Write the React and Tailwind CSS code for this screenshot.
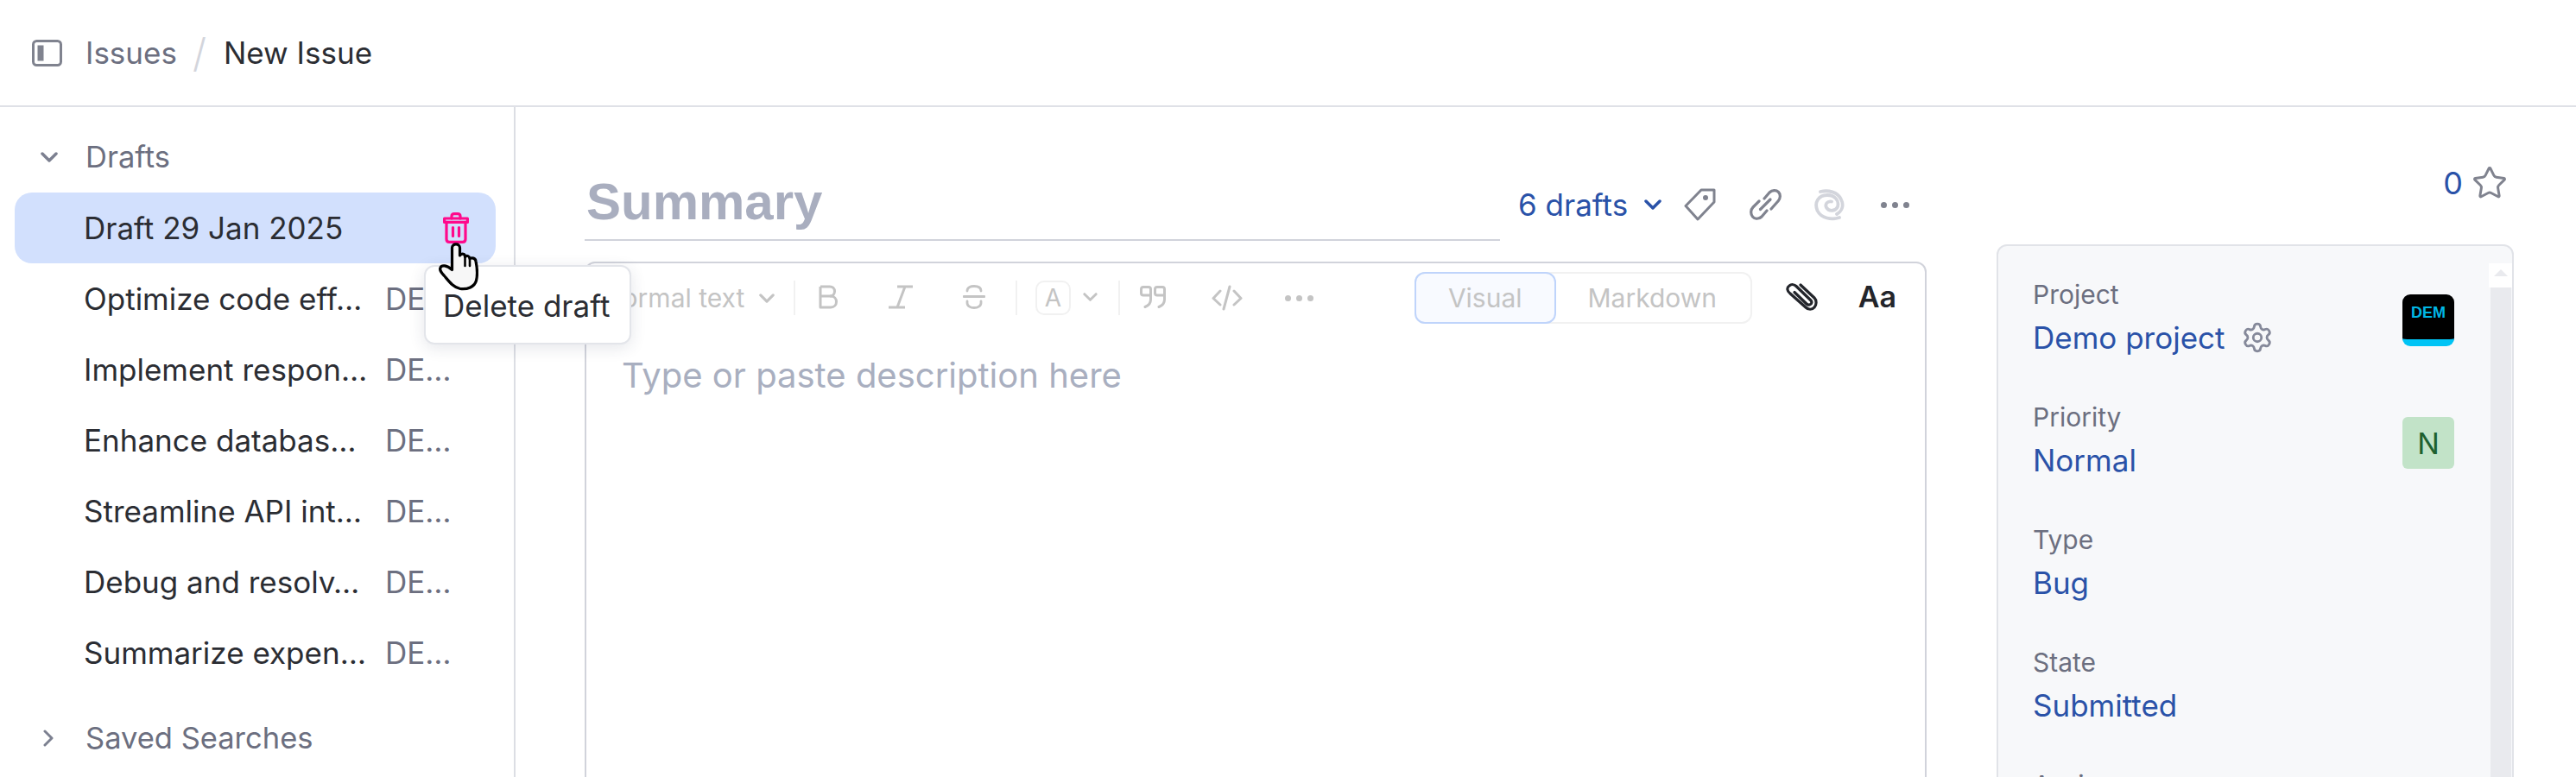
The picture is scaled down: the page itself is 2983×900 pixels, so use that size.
import React from 'react';
import { Star, Settings } from 'lucide-react';

const drafts = [
  { title: 'Optimize code eff…' },
  { title: 'Implement respon…' },
  { title: 'Enhance databas…' },
  { title: 'Streamline API int…' },
  { title: 'Debug and resolv…' },
  { title: 'Summarize expen…' },
];

const fields = [
  { label: 'Project', value: 'Demo project', gear: true, badge: 'dem' },
  { label: 'Priority', value: 'Normal', badge: 'n' },
  { label: 'Type', value: 'Bug' },
  { label: 'State', value: 'Submitted' },
  { label: 'Assignee' },
];

function Chevron({ className, stroke = '#7c8090', width = 3.5 }) {
  return (
    <svg viewBox="0 0 20 12" fill="none" className={className}>
      <path d="M2 2l8 8 8-8" stroke={stroke} strokeWidth={width} strokeLinecap="round" strokeLinejoin="round" />
    </svg>
  );
}

function Trash() {
  return (
    <svg viewBox="0 0 30 36" fill="none" className="w-[30px] h-[36px]" stroke="#ff0a8c" strokeWidth="3.2" strokeLinejoin="round" strokeLinecap="round">
      <path d="M10 7V4.500C10 2.800 11 1.600 13 1.600h4c2 0 3 1.200 3 2.900V7" />
      <path d="M1.600 7h26.800v4.400H1.600z" />
      <path d="M4 11.400V31c0 2 1.200 3.400 3.200 3.400h15.600c2 0 3.200-1.400 3.200-3.400V11.400" />
      <path d="M11.500 17.500v10M18.500 17.500v10" />
    </svg>
  );
}

function HandCursor() {
  return (
    <svg viewBox="0 0 46 56" fill="none" className="w-[46px] h-[56px]">
      <path
        d="M15.500 6C15.500 0.500 24.500 0.500 24.500 6V15C27 12 30.500 13 30.500 16.500C33 14.500 35.500 15.500 36 18.500C38.500 17 42.500 18 43 21.500C44.500 29 45 38 43.500 44C41.500 51.500 33 54.500 25 53.500C17 52 12 45 6.500 38.500C3.500 35 0.500 32 2 29C3.500 25.500 9 26 15.500 31.500Z"
        fill="#f7f7f7"
        stroke="#000"
        strokeWidth="3.2"
        strokeLinejoin="round"
      />
      <path d="M30.500 16.500V27M36 18.500V27" stroke="#000" strokeWidth="2.600" strokeLinecap="round" />
    </svg>
  );
}

function ToolDivider({ className }) {
  return <div className={`w-[2px] h-[40px] bg-[#f1f1f1] ${className}`} />;
}

function Field({ label, value, gear, badge }) {
  return (
    <div className="h-[142px] flex justify-between items-start pr-[40px] shrink-0">
      <div>
        <div className="h-[36px] leading-[36px] text-[30px] text-[#6c6f80]">{label}</div>
        {value && (
          <div className="mt-[7px] h-[50px] flex items-center text-[35px] text-[#2a52a8]">
            {value}
            {gear && <Settings className="w-[38px] h-[38px] ml-[18px] text-[#85899a]" strokeWidth={1.8} />}
          </div>
        )}
      </div>
      {badge === 'dem' && (
        <div className="w-[60px] h-[60px] mt-[18px] rounded-[9px] bg-black border-b-[8px] border-[#00c4f5] pl-[10px] pt-[9px] text-[18px] leading-[24px] font-bold text-[#00b6e4] font-['Liberation_Sans',sans-serif]">
          DEM
        </div>
      )}
      {badge === 'n' && (
        <div className="w-[60px] h-[60px] mt-[18px] rounded-[6px] bg-[#c2e3c8] flex items-center justify-center text-[34px] text-[#1f6130]">
          N
        </div>
      )}
    </div>
  );
}

export default function App() {
  return (
    <div className="h-screen overflow-hidden bg-white font-['Inter',sans-serif] text-[#2b2d33]">
      {/* Topbar */}
      <div className="h-[124px] border-b-2 border-[#dfe1e7] flex items-center pl-[37px] text-[35px]">
        <svg viewBox="0 0 35 31" fill="none" className="w-[35px] h-[31px]">
          <rect x="1.500" y="1.500" width="32" height="28" rx="4" stroke="#80838f" strokeWidth="3" />
          <rect x="6.500" y="6.500" width="7" height="18" fill="#80838f" />
        </svg>
        <span className="ml-[27px] text-[#6c6f80]">Issues</span>
        <span className="ml-[18px] mr-[20px] text-[46px] leading-[46px] font-light text-[#d3d5dc]">/</span>
        <span>New Issue</span>
      </div>

      <div className="flex">
        {/* Sidebar */}
        <div className="relative w-[597px] h-[776px] shrink-0 border-r-2 border-[#dcdee4] pt-[17px] pl-[17px] pr-[21px] text-[35px]">
          <div className="h-[82px] flex items-center text-[34.500px] text-[#6c6f80]">
            <Chevron className="w-[20px] h-[12px] ml-[30px]" />
            <span className="ml-[32px]">Drafts</span>
          </div>
          <div className="h-[82px] flex items-center justify-between rounded-[20px] bg-[#d2e0fd] pl-[80px] pr-[31px]">
            <span>Draft 29 Jan 2025</span>
            <Trash />
          </div>
          {drafts.map((d) => (
            <div key={d.title} className="h-[82px] flex items-center pl-[80px]">
              <span className="w-[349px] shrink-0 whitespace-nowrap">{d.title}</span>
              <span className="text-[#6c6f80]">DE…</span>
            </div>
          ))}
          <div className="h-[82px] mt-[17px] flex items-center text-[34.500px] text-[#6c6f80]">
            <svg viewBox="0 0 12 20" fill="none" className="w-[12px] h-[20px] ml-[33px]">
              <path d="M2 2l8 8-8 8" stroke="#7c8090" strokeWidth="3" strokeLinecap="round" strokeLinejoin="round" />
            </svg>
            <span className="ml-[37px]">Saved Searches</span>
          </div>

          {/* Tooltip and pointer */}
          <div className="absolute left-[491px] top-[183px] w-[240px] h-[92px] z-10 rounded-[12px] bg-white border-2 border-[#e3e5ea] shadow-[0_4px_18px_rgba(40,50,80,0.12)] pl-[20px] pt-[23px] text-[35px] leading-[44px]">
            Delete draft
          </div>
          <div className="absolute left-[508px] top-[157px] z-20">
            <HandCursor />
          </div>
        </div>

        {/* Main */}
        <div className="flex-1 flex pl-[80px] pr-[72px] min-w-0">
          <div className="w-[1554px] shrink-0 pt-[62px]">
            <div className="flex items-center">
              <div className="w-[1060px] h-[93px] border-b-2 border-[#d1d3db] pl-[2px] pt-[12px] text-[60px] leading-[72px] font-bold text-[#a9aebf] font-['Liberation_Sans',sans-serif]">
                Summary
              </div>
              <div className="ml-[21px] flex items-center mt-[9px]">
                <span className="text-[35px] text-[#2a52a8]">6 drafts</span>
                <Chevron className="w-[20px] h-[12px] ml-[19px]" stroke="#2a52a8" />
                <svg viewBox="0 0 37 38" fill="none" className="w-[37px] h-[38px] ml-[26px]" stroke="#80838f" strokeWidth="3" strokeLinejoin="round">
                  <path d="M35 2H20L2 20.500 16 36 35 16z" />
                  <circle cx="25" cy="11" r="3" fill="#80838f" stroke="none" />
                </svg>
                <svg viewBox="0 0 37 37" fill="none" className="w-[37px] h-[37px] ml-[39px]" stroke="#80838f" strokeWidth="3.2" strokeLinecap="round" strokeLinejoin="round">
                  <path d="M17 11l6-7c3-3 8-3 10.500-.500C36 6 36 11 33 14l-8 9" />
                  <path d="M11 14l-7 7c-3 3-3 8-.500 11C6 35 11 35 14 32l6-7" />
                  <path d="M12.500 23.500L24 12" />
                </svg>
                <svg viewBox="0 0 36 37" fill="none" className="w-[36px] h-[37px] ml-[38px]" stroke="#d3d5dc" strokeWidth="3.800" strokeLinecap="round" strokeLinejoin="round">
                  <path d="M29 33C20 36 8 34 3.500 25 -0.500 15 5 7 15 7c9 0 14 6.500 12 13.500-2 5-10 6-13 1-2-4 1-8 6-7" />
                  <path d="M7 3c9-2 20 0 24 9 4 8 0 14-5 17" />
                </svg>
                <div className="ml-[41px] flex gap-[6px]">
                  <div className="w-[7px] h-[7px] rounded-full bg-[#80838f]" />
                  <div className="w-[7px] h-[7px] rounded-full bg-[#80838f]" />
                  <div className="w-[7px] h-[7px] rounded-full bg-[#80838f]" />
                </div>
              </div>
            </div>

            {/* Editor */}
            <div className="mt-[24px] h-[700px] border-2 border-[#d1d3db] rounded-[12px]">
              <div className="h-[80px] flex items-center pl-[19px] pr-[33px] text-[#c4c4c4]">
                <span className="text-[30px] w-[167px] whitespace-nowrap">Normal text</span>
                <Chevron className="w-[18px] h-[11px] ml-[14px]" stroke="#c4c4c4" />
                <ToolDivider className="ml-[22px]" />
                <svg viewBox="0 0 22 28" fill="none" className="w-[22px] h-[28px] ml-[27px] -mt-[2px]" stroke="#c4c4c4" strokeWidth="3" strokeLinejoin="round">
                  <path d="M2 2v24h12c4 0 6.500-3 6.500-6.500S18 13 14 13H2" />
                  <path d="M2 2h11c3 0 5.500 2 5.500 5.500S16 13 13 13" />
                </svg>
                <svg viewBox="0 0 28 28" fill="none" className="w-[28px] h-[28px] ml-[59px] -mt-[2px]" stroke="#c4c4c4" strokeWidth="3">
                  <path d="M10 2h18M0 26h19M19 2l-9 24" />
                </svg>
                <svg viewBox="0 0 26 28" fill="none" className="w-[26px] h-[28px] ml-[58px] -mt-[2px]" stroke="#c4c4c4" strokeWidth="2.800" strokeLinecap="round">
                  <path d="M5 7c0-4 4-5.500 8-5.500s8 1.500 8 5.500" />
                  <path d="M1 13.500h24" />
                  <path d="M5 19v2c0 3.500 4 5.500 8 5.500s8-2 8-5.500v-2" />
                </svg>
                <ToolDivider className="ml-[35px]" />
                <div className="ml-[21px] w-[41px] h-[40px] rounded-[10px] border-2 border-[#f1f1f1] flex items-center justify-center text-[28px]">A</div>
                <Chevron className="w-[17px] h-[10px] ml-[14px] -mt-[2px]" stroke="#c4c4c4" />
                <ToolDivider className="ml-[24px]" />
                <svg viewBox="0 0 30 26" fill="none" className="w-[30px] h-[26px] ml-[23px] -mt-[2px]" stroke="#c4c4c4" strokeWidth="3" strokeLinecap="round" strokeLinejoin="round">
                  <path d="M12.500 11H4c-1.500 0-2.500-1-2.500-2.500V4C1.500 2.500 2.500 1.500 4 1.500h6c1.500 0 2.500 1 2.500 2.500v12c0 4-2.500 7-6.500 8.500" />
                  <path d="M28.500 11H20c-1.500 0-2.500-1-2.500-2.500V4c0-1.500 1-2.500 2.500-2.500h6c1.500 0 2.500 1 2.500 2.500v12c0 4-2.500 7-6.500 8.500" />
                </svg>
                <svg viewBox="0 0 36 30" fill="none" className="w-[36px] h-[30px] ml-[53px]" stroke="#c4c4c4" strokeWidth="3" strokeLinecap="round" strokeLinejoin="round">
                  <path d="M10 7l-8 8.500 8 7.500M26 7l8 8.500-8 7.500M21 2l-7 26" />
                </svg>
                <div className="ml-[49px] flex gap-[6px]">
                  <div className="w-[7px] h-[7px] rounded-full bg-[#c4c4c4]" />
                  <div className="w-[7px] h-[7px] rounded-full bg-[#c4c4c4]" />
                  <div className="w-[7px] h-[7px] rounded-full bg-[#c4c4c4]" />
                </div>

                <div className="ml-auto flex w-[391px] h-[60px] rounded-[12px] border-2 border-[#f1f1f1] text-[30px]">
                  <div className="w-[164px] -m-[2px] h-[60px] rounded-[12px] border-2 border-[#bfd4fb] bg-[#f8faff] flex items-center justify-center">Visual</div>
                  <div className="flex-1 flex items-center justify-center">Markdown</div>
                </div>
                <svg viewBox="0 0 37 33" fill="none" className="w-[37px] h-[33px] ml-[39px] -mt-[2px]" stroke="#23252b" strokeWidth="3.200" strokeLinecap="round" strokeLinejoin="round">
                  <path d="M17 2l16 15c3 3 2.500 8.500 0 11-2.500 3-7 3-10 0L5 12C1 9 1 5 4 3c2.500-2 6-1.500 8 .500l17 16.500c1.500 1.500 1 3.500-.500 4.500-1.500 1-3.500.500-4.500-.500L10 10.500" />
                </svg>
                <span className="ml-[47px] -mt-[3px] text-[34px] font-semibold text-[#23252b]">Aa</span>
              </div>
              <div className="pl-[41px] pt-[25px] text-[40px] leading-[50px] text-[#a9afc0]">Type or paste description here</div>
            </div>
          </div>

          {/* Right column */}
          <div className="ml-[81px] flex-1 flex flex-col min-w-0">
            <div className="mt-[69px] h-[37px] flex items-center justify-end pr-[7px] text-[36px] text-[#2a52a8]">
              0
              <Star className="w-[42px] h-[42px] ml-[10px] text-[#80838f]" strokeWidth={1.7} />
            </div>
            <div className="mt-[53px] h-[700px] flex rounded-[12px] border-2 border-[#e1e3e8] bg-[#f7f8fa]">
              <div className="flex-1 pl-[40px] pt-[38px] flex flex-col min-w-0">
                {fields.map((f) => (
                  <Field key={f.label} {...f} />
                ))}
              </div>
              <div className="w-[27px] pt-[20px] flex flex-col">
                <div className="h-[28px] bg-white flex items-center justify-center pb-[6px]">
                  <svg viewBox="0 0 16 8" className="w-[16px] h-[8px]">
                    <path d="M8 0l8 8H0z" fill="#e9eaee" />
                  </svg>
                </div>
                <div className="flex-1 w-[24px] ml-[2px] bg-[#e9eaee]" />
              </div>
            </div>
          </div>
        </div>
      </div>
    </div>
  );
}
